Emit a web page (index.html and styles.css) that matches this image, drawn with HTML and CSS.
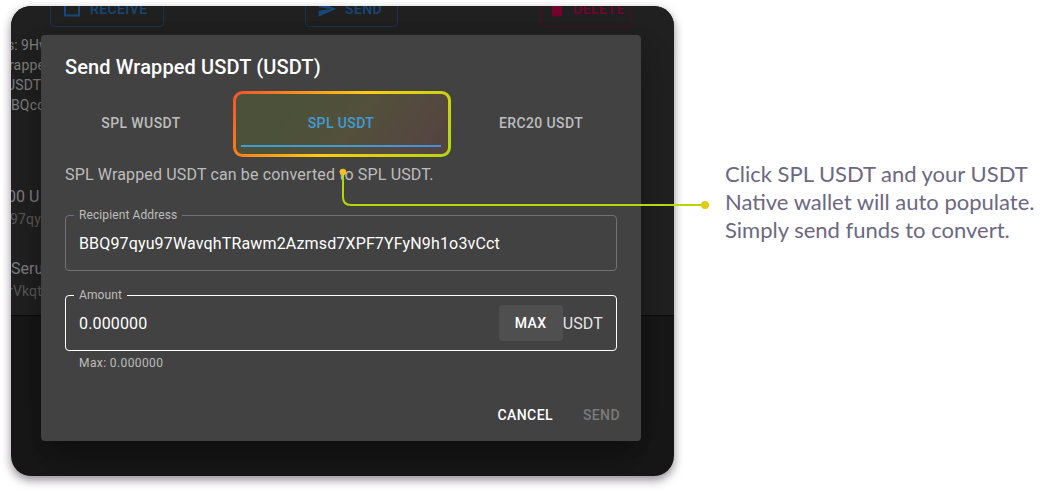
FILE: index.html
```html
<!DOCTYPE html>
<html lang="en">
<head>
<meta charset="utf-8">
<title>Send Wrapped USDT</title>
<link rel="stylesheet" href="styles.css">
</head>
<body>
<main class="page">
  <section class="screen">
    <div class="wallet">
      <div class="wallet-actions">
        <span class="outline-btn receive"><svg width="20" height="20" viewBox="0 0 20 20"><path d="M3 1h14v15.500H3z" fill="none" stroke="currentColor" stroke-width="2"/></svg>Receive</span>
        <span class="outline-btn send"><svg width="20" height="20" viewBox="0 0 24 24"><path d="M2.010 21L23 12 2.010 3 2 10l15 2-15 2z" fill="currentColor"/></svg>Send</span>
        <span class="outline-btn delete"><svg width="20" height="20" viewBox="0 0 24 24"><path d="M6 19c0 1.100.9 2 2 2h8c1.100 0 2-.9 2-2V7H6v12zM19 4h-3.500l-1-1h-5l-1 1H5v2h14V4z" fill="currentColor"/></svg>Delete</span>
      </div>
      <div class="wallet-info">
        <span>s: 9Hw</span><span>rappe</span><span>USDT</span><span>BQcc</span>
      </div>
      <div class="token first"><span>00 U</span><small>97qy</small></div>
      <div class="token second"><span>Seru</span><small>rVkqt</small></div>
    </div>
    <div class="dialog">
      <h1 class="title">Send Wrapped USDT (USDT)</h1>
      <div class="tabs">
        <span class="tab">SPL WUSDT</span>
        <span class="tab active">SPL USDT</span>
        <span class="tab">ERC20 USDT</span>
      </div>
      <div class="content">
        <p class="note">SPL Wrapped USDT can be converted to SPL USDT.</p>
        <fieldset class="field"><legend>Recipient Address</legend>
          <div class="row"><span class="address">BBQ97qyu97WavqhTRawm2Azmsd7XPF7YFyN9h1o3vCct</span></div>
        </fieldset>
        <fieldset class="field focused"><legend>Amount</legend>
          <div class="row"><span>0.000000</span><span class="max">MAX</span><span class="unit">USDT</span></div>
        </fieldset>
        <p class="helper">Max: 0.000000</p>
      </div>
      <div class="dialog-actions"><span class="action">Cancel</span><span class="action disabled">Send</span></div>
    </div>
  </section>
  <p class="caption">Click SPL USDT and your USDT<br>Native wallet will auto populate.<br>Simply send funds to convert.</p>
  <svg class="callout" width="1041" height="492" viewBox="0 0 1041 492">
    <defs>
      <linearGradient id="edge" gradientUnits="userSpaceOnUse" x1="261" y1="65" x2="423" y2="183">
        <stop offset="0" stop-color="#f15a29"/><stop offset=".5" stop-color="#ffc914"/><stop offset="1" stop-color="#b5d80a"/>
      </linearGradient>
      <linearGradient id="tint" gradientUnits="userSpaceOnUse" x1="261" y1="65" x2="423" y2="183">
        <stop offset="0" stop-color="#728f18"/><stop offset=".25" stop-color="#728f18"/><stop offset=".55" stop-color="#958820"/><stop offset="1" stop-color="#a04343"/>
      </linearGradient>
    </defs>
    <rect x="234.500" y="92.500" width="215" height="63" rx="8" fill="url(#tint)" fill-opacity=".2" stroke="url(#edge)" stroke-width="3"/>
    <path d="M343 174V197q0 8 8 8H704" fill="none" stroke="#b5d900" stroke-width="2"/>
    <circle cx="343" cy="172" r="3.200" fill="#ffc015"/>
    <circle cx="705" cy="205" r="4" fill="#e2cc12"/>
  </svg>
</main>
</body>
</html>
```
FILE: styles.css
```css
* { box-sizing: border-box; }
body { margin: 0; background: #fff; font-family: Roboto, sans-serif; }
.page { position: relative; display: flex; width: 1041px; height: 492px; padding: 6px 0 0 11px; overflow: hidden; }
.screen { position: relative; flex: none; width: 663px; height: 470px; border-radius: 20px; overflow: hidden; background: #181818; }
.page::before { content: ""; position: absolute; left: 11px; top: 6px; width: 663px; height: 470px; border-radius: 20px; box-shadow: 0 4px 10px rgba(35, 24, 35, .5); }
.wallet { height: 310px; background: #212121; border-bottom: 1px solid #0c0c0c; overflow: hidden; color: #818181; }
.wallet-actions { display: flex; margin-top: -15px; padding-left: 39px; }
.outline-btn { display: flex; align-items: center; height: 36px; padding: 0 0 0 11px; gap: 8px; border: 1px solid; border-radius: 4px; font-size: 14px; font-weight: 500; letter-spacing: .4px; text-transform: uppercase; }
.receive { width: 114px; color: #17497a; border-color: #18354f; }
.send { width: 93px; margin-left: 141px; color: #17497a; border-color: #18354f; }
.delete { width: 92px; margin-left: 142px; padding-left: 6px; gap: 6px; color: #75052d; border-color: #4e0d25; }
.wallet-info { display: flex; flex-direction: column; align-items: flex-start; width: 30px; margin-top: 8px; font-size: 14px; line-height: 20px; letter-spacing: .15px; white-space: nowrap; }
.wallet-info span:nth-child(1) { margin-left: -4px; letter-spacing: 0; }
.wallet-info span:nth-child(2) { margin-left: -2px; }
.wallet-info span:nth-child(3) { margin-left: -5px; }
.token { display: flex; flex-direction: column; width: 30px; font-size: 16px; line-height: 24px; white-space: nowrap; }
.token small { font-size: 14px; line-height: 20px; color: #5b5b5b; letter-spacing: .15px; }
.first { margin-top: 70px; margin-left: -4px; }
.first small { margin-left: 3px; }
.second { margin-top: 28px; }
.second small { margin-left: -3px; }
.dialog { position: absolute; left: 30px; top: 29px; display: flex; flex-direction: column; width: 600px; height: 406px; border-radius: 4px; background: #424242; color: #fff; box-shadow: 0 11px 15px -7px rgba(0,0,0,.2), 0 24px 38px 3px rgba(0,0,0,.14), 0 9px 46px 8px rgba(0,0,0,.12); }
.title { margin: 0; padding: 16px 24px; font-size: 20px; line-height: 32px; font-weight: 500; letter-spacing: .12px; }
.tabs { display: grid; grid-template-columns: repeat(3, 1fr); }
.tab { height: 48px; line-height: 49px; text-align: center; font-size: 14px; font-weight: 500; letter-spacing: .4px; color: #bdbdbd; }
.active { color: #30a0ff; border-bottom: 2px solid #30a0ff; }
.content { display: flex; flex-direction: column; padding: 16px 24px 0; }
.note { margin: 0 0 23px; font-size: 16px; line-height: 24px; letter-spacing: .15px; color: #bdbdbd; }
.field { width: 552px; height: 61px; min-width: 0; margin: 0 0 19px; padding: 0 13px; border: 1px solid #717171; border-radius: 4px; font-size: 16px; letter-spacing: .15px; }
.field legend { height: 11px; margin-left: -5px; padding: 0 5px; font-size: 12px; line-height: 11px; letter-spacing: .1px; color: #bdbdbd; }
.row { display: flex; align-items: center; height: 45px; }
.focused { border-color: #fff; margin-bottom: 2px; }
.address { letter-spacing: .15px; }
.max { width: 64px; height: 36px; margin: -2px 0 0 auto; border-radius: 4px; background: #4f4f4f; text-align: center; line-height: 36px; font-size: 14px; font-weight: 500; letter-spacing: .4px; }
.unit { color: #e5e5e5; }
.helper { margin: 0; padding-left: 14px; font-size: 12px; line-height: 20px; letter-spacing: .4px; color: #bdbdbd; }
.dialog-actions { display: flex; justify-content: flex-end; gap: 14px; margin-top: auto; padding: 8px 13px 8px 8px; }
.action { height: 36px; padding: 0 8px; line-height: 37px; font-size: 14px; font-weight: 500; letter-spacing: .4px; text-transform: uppercase; }
.disabled { color: #7a7a7a; }
.caption { position: relative; margin: 154px 0 0 51px; font-family: Lato, sans-serif; font-size: 22px; line-height: 28px; color: #6c6882; white-space: nowrap; }
.callout { position: absolute; left: 0; top: 0; }
```
